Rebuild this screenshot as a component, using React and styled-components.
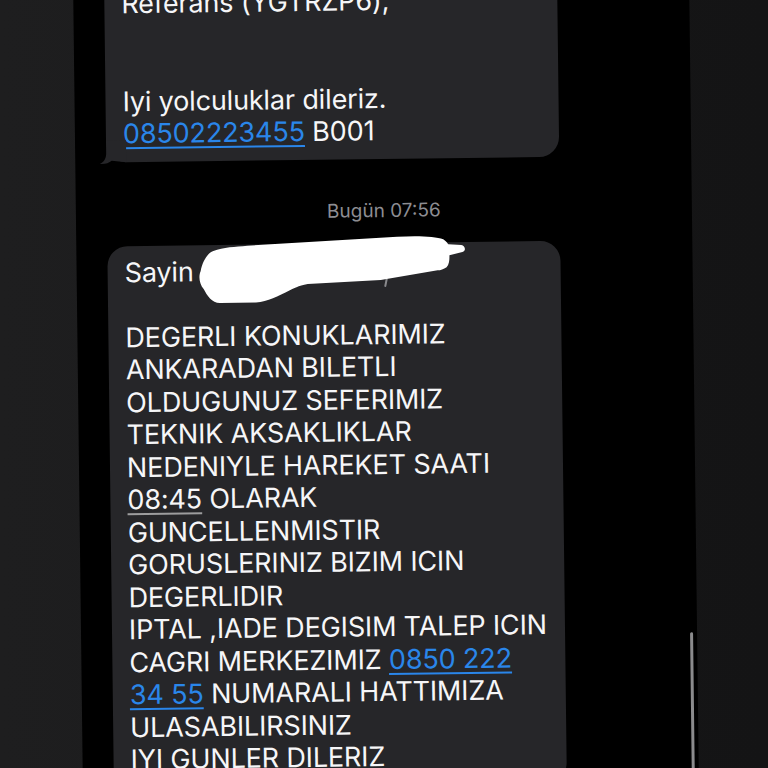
import React from 'react'
import styled, { createGlobalStyle } from 'styled-components'

const GlobalStyle = createGlobalStyle`
    html, body {
        margin: 0;
        padding: 0;
        background: #1c1c1d;
        overflow: hidden;
    }
`

const Page = styled.div`
    display: flex;
    height: 100vh;
    overflow: hidden;
    background: linear-gradient(90deg, #1e1e1f 0%, #1b1b1c 50%, #161617 50%, #141415 100%);
`

const Screen = styled.div`
    position: relative;
    flex: none;
    display: flex;
    flex-direction: column;
    align-items: flex-start;
    width: 616px;
    height: calc(100vh + 40px);
    margin-left: 78px;
    margin-top: -20px;
    background: #000;
    transform: rotate(-0.7deg);
    overflow: hidden;
    font-family: Inter, "Liberation Sans", sans-serif;
`

const Bubble = styled.div`
    position: relative;
    box-sizing: border-box;
    width: 453px;
    margin-left: 31px;
    margin-top: ${p => (p.$lead ? '-60px' : '0')};
    padding: ${p => (p.$lead ? '65px' : '11px')} 17px 11px;
    border-radius: 20px;
    background: #262629;
    color: #f6f6f8;
    font-size: 27px;
    line-height: 32.5px;
    letter-spacing: -0.15px;
`

const Line = styled.div`
    height: 32.5px;
    white-space: pre;
`

const Link = styled.span`
    color: #2a86ea;
    text-decoration: underline;
    text-decoration-thickness: 2px;
    text-underline-offset: 4px;
`

const DateLink = styled.span`
    text-decoration: underline;
    text-decoration-color: rgba(255, 255, 255, 0.55);
    text-decoration-thickness: 2px;
    text-underline-offset: 4px;
`

const Stamp = styled.div`
    align-self: center;
    margin: 40px 0 20px;
    font-size: 19px;
    line-height: 24px;
    color: #8d8d92;
`

const Tail = styled.svg`
    position: absolute;
    left: -7px;
    bottom: -2px;
`

const Redaction = styled.svg`
    position: absolute;
    left: 90px;
    top: -10px;
    overflow: visible;
`

const ScrollThumb = styled.div`
    position: absolute;
    right: 4px;
    top: 656px;
    width: 3px;
    height: 220px;
    border-radius: 2px;
    background: #8b8b8d;
`

const message = [
    'DEGERLI KONUKLARIMIZ',
    'ANKARADAN BILETLI',
    'OLDUGUNUZ SEFERIMIZ',
    'TEKNIK AKSAKLIKLAR',
    'NEDENIYLE HAREKET SAATI',
]

const message2 = [
    'GUNCELLENMISTIR',
    'GORUSLERINIZ BIZIM ICIN',
    'DEGERLIDIR',
    'IPTAL ,IADE DEGISIM TALEP ICIN',
]

export default function App() {
    return (
        <>
            <GlobalStyle />
            <Page>
                <Screen>
                    <Bubble $lead>
                        <Line>Referans (YGTRZP6),</Line>
                        <Line> </Line>
                        <Line> </Line>
                        <Line>Iyi yolculuklar dileriz.</Line>
                        <Line><Link>08502223455</Link> B001</Line>
                        <Tail width="30" height="24" viewBox="0 0 30 24">
                            <path d="M7 0 L7 13 C7 18 4.5 21.5 0.5 23.5 C5.5 24 9.5 22.8 12.5 20.5 L27 22 L27 0 Z" fill="#262629" />
                        </Tail>
                    </Bubble>

                    <Stamp>Bugün 07:56</Stamp>

                    <Bubble>
                        <Line>Sayin</Line>
                        <Line> </Line>
                        {message.map(text => <Line key={text}>{text}</Line>)}
                        <Line><DateLink>08:45</DateLink> OLARAK</Line>
                        {message2.map(text => <Line key={text}>{text}</Line>)}
                        <Line>CAGRI MERKEZIMIZ <Link>0850 222</Link></Line>
                        <Line><Link>34 55</Link> NUMARALI HATTIMIZA</Line>
                        <Line>ULASABILIRSINIZ</Line>
                        <Line>IYI GUNLER DILERIZ</Line>
                        <Redaction width="270" height="72" viewBox="0 0 270 72">
                            <path d="M189 46 L187.5 53" stroke="#8a8a8d" strokeWidth="2" strokeLinecap="round" />
                            <path
                                d="M6 54 C1 48 1 40 3 36 C5 26 10 18 16 16 C26 12 38 12 50 11 L200 4 C220 3 238 4 246 7 C249 9 250 11 251 12 L264 13 C268 14 269 19 265 20 L252 23 C252 27 252 32 249 35 C246 37 243 38 240 38 L183 47 L110 50 C100 52 96 54 92 56 C80 62 70 67 58 68 L22 68 C14 68 9 60 6 54 Z"
                                fill="#fff"
                            />
                        </Redaction>
                    </Bubble>
                    <ScrollThumb />
                </Screen>
            </Page>
        </>
    )
}
